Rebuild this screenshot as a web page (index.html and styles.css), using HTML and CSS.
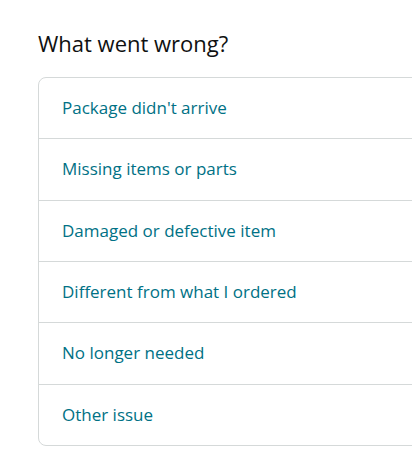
FILE: index.html
```html
<!DOCTYPE html>
<html lang="en">
<head>
<meta charset="utf-8">
<title>What went wrong?</title>
<link rel="stylesheet" href="styles.css">
</head>
<body>
<main class="page">
  <h1 class="title">What went wrong?</h1>
  <ul class="reasons">
    <li class="reason"><a class="reason-link" href="#">Package didn't arrive</a></li>
    <li class="reason"><a class="reason-link" href="#">Missing items or parts</a></li>
    <li class="reason"><a class="reason-link" href="#">Damaged or defective item</a></li>
    <li class="reason"><a class="reason-link" href="#">Different from what I ordered</a></li>
    <li class="reason"><a class="reason-link" href="#">No longer needed</a></li>
    <li class="reason"><a class="reason-link" href="#">Other issue</a></li>
  </ul>
</main>
</body>
</html>
```
FILE: styles.css
```css
html, body {
  margin: 0;
  padding: 0;
  overflow: hidden;
  background: #ffffff;
}
body {
  font-family: "Open Sans", "Liberation Sans", Arial, sans-serif;
  color: #0f1111;
}
.page {
  padding: 29px 0 0 38px;
}
.title {
  margin: 0 0 20px;
  font-size: 22px;
  font-weight: 400;
  line-height: 28px;
  color: #0f1111;
}
.reasons {
  list-style: none;
  margin: 0 -30px 0 0;
  padding: 0;
  border: 1px solid #d5d9d9;
  border-radius: 8px;
}
.reason {
  border-top: 1px solid #d5d9d9;
}
.reason:first-child {
  border-top: none;
}
.reason-link {
  display: block;
  padding: 0 23px;
  height: 60.33px;
  line-height: 60px;
  font-size: 17px;
  color: #007185;
  text-decoration: none;
}
```
